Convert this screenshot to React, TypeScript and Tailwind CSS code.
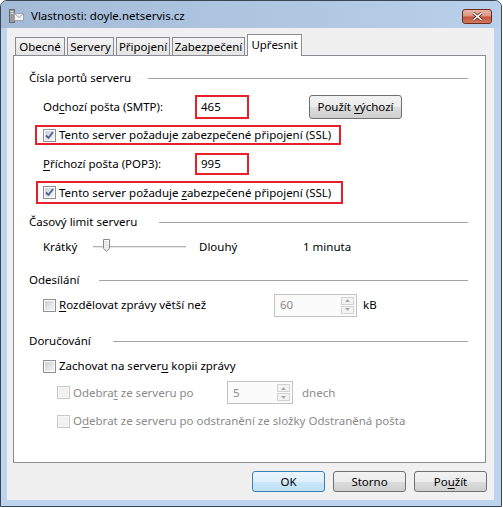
import type { ReactNode } from 'react';

const U = ({ children }: { children: ReactNode }) => <span className="underline underline-offset-2">{children}</span>;

function Check({ checked = false, disabled = false }: { checked?: boolean; disabled?: boolean }) {
  return (
    <span
      className={`relative flex w-[13px] h-[13px] shrink-0 items-center justify-center border ${
        disabled ? 'border-[#c8c8c8] bg-[#f7f7f7]' : 'border-[#8e8f8f] bg-white'
      }`}
    >
      <span
        className={`w-[9px] h-[9px] ${
          disabled ? 'bg-[#f1f1f1]' : 'bg-gradient-to-br from-[#cbcfd5] to-[#f6f6f6]'
        }`}
      />
      {checked && (
        <svg className="absolute inset-0" width="11" height="11" viewBox="0 0 11 11">
          <path d="M2 5.5 L4.5 8 L9 2" fill="none" stroke="#4a5f97" strokeWidth="1.8" />
        </svg>
      )}
    </span>
  );
}

function Spin({ value, w }: { value: string; w: string }) {
  return (
    <div className={`flex items-center h-[23px] border border-[#c2c2c2] bg-[#fbfbfb] pl-[5px] pr-[2px] ${w}`}>
      <span className="flex-1 text-[#8a8a8a]">{value}</span>
      <div className="flex flex-col gap-[1px]">
        <span className="flex w-[13px] h-[8px] items-center justify-center border border-[#d2d2d2] bg-[#f3f3f3]">
          <svg width="5" height="3" viewBox="0 0 5 3"><path d="M0 3 L2.5 0 L5 3 Z" fill="#a8a8a8" /></svg>
        </span>
        <span className="flex w-[13px] h-[8px] items-center justify-center border border-[#d2d2d2] bg-[#f3f3f3]">
          <svg width="5" height="3" viewBox="0 0 5 3"><path d="M0 0 L2.5 3 L5 0 Z" fill="#a8a8a8" /></svg>
        </span>
      </div>
    </div>
  );
}

function Btn({ children, def = false, className = '' }: { children: ReactNode; def?: boolean; className?: string }) {
  return (
    <div
      className={`flex items-center justify-center rounded-[3px] border ${
        def
          ? 'border-[#3c7fb1] bg-[linear-gradient(#eaf5fc_0%,#def0fb_50%,#cbe7f8_50%,#bfe0f5_100%)]'
          : 'border-[#707070] bg-[linear-gradient(#f2f2f2_0%,#ebebeb_50%,#dddddd_50%,#cfcfcf_100%)]'
      } ${className}`}
    >
      <span>{children}</span>
    </div>
  );
}

function Header({ text, w }: { text: string; w: string }) {
  return (
    <div className="flex items-center h-[16px] ml-[15px] mr-[17px]">
      <span className={`shrink-0 ${w}`}>{text}</span>
      <span className="flex-1 h-px bg-[#a5a5a5]" />
    </div>
  );
}

const tabs = [
  { name: 'Obecné', w: 'w-[50px]' },
  { name: 'Servery', w: 'w-[47px]' },
  { name: 'Připojení', w: 'w-[54px]' },
  { name: 'Zabezpečení', w: 'w-[73px]' },
];

export default function App() {
  return (
    <div className="w-[503px] h-[508px] bg-white font-['Segoe_UI','Noto_Sans',sans-serif] text-[11.5px] text-black leading-none whitespace-nowrap">
      <div className="w-[502px] h-[507px] rounded-t-[7px] border border-[#3a4656] bg-[#bcd4ec] flex flex-col overflow-hidden">
        {/* Title bar */}
        <div className="h-[27px] shrink-0 flex items-center bg-gradient-to-r from-[#a3bbd7] to-[#b9d0ea] pl-[8px] pr-[8px]">
          <svg width="15" height="14" viewBox="0 0 15 14" className="mt-[2px]">
            <rect x="0.5" y="0.5" width="5" height="13" fill="#9a9a9a" stroke="#6a6a6a" />
            <rect x="1.5" y="2" width="3" height="1" fill="#e0e0e0" />
            <rect x="1.5" y="4" width="3" height="1" fill="#e0e0e0" />
            <rect x="5.5" y="4.5" width="9" height="7" fill="#f4f4f4" stroke="#9aa4b0" />
            <path d="M5.5 4.5 L10 8.5 L14.5 4.5" fill="none" stroke="#9aa4b0" />
          </svg>
          <span className="ml-[7px] mt-[2px] text-[11.5px] text-black">Vlastnosti: doyle.netservis.cz</span>
          <div className="flex-1" />
          <div className="mt-[3px] mr-[1px] w-[30px] h-[15px] rounded-[3px] border border-[#6f2a20] bg-[linear-gradient(#eab4a6_0%,#dc9684_45%,#c4533c_55%,#d27a62_100%)] flex items-center justify-center">
            <svg width="11" height="9" viewBox="0 0 11 9">
              <path d="M1.5 1 L9.5 8 M9.5 1 L1.5 8" stroke="#5a2a22" strokeWidth="3" />
              <path d="M1.5 1 L9.5 8 M9.5 1 L1.5 8" stroke="#ffffff" strokeWidth="1.6" />
            </svg>
          </div>
        </div>

        {/* Client area */}
        <div className="ml-[6px] mr-[7px] h-[472px] bg-[#f0f0f0] flex flex-col">
          {/* Tabs */}
          <div className="mt-[6px] ml-[8px] h-[21px] flex items-end gap-[2px]">
            {tabs.map((t) => (
              <div
                key={t.name}
                className={`h-[18px] ${t.w} border border-b-0 border-[#898c95] bg-[linear-gradient(#f3f3f3,#e3e3e3)] flex items-center justify-center pt-[1px]`}
              >
                {t.name}
              </div>
            ))}
            <div className="relative z-10 -mb-[1px] h-[22px] w-[55px] border border-b-0 border-[#898c95] bg-white flex items-center justify-center pb-[2px]">
              Upřesnit
            </div>
          </div>

          {/* Panel */}
          <div className="ml-[6px] w-[473px] h-[408px] border border-[#898c95] bg-white flex flex-col">
            <div className="mt-[14px]">
              <Header text="Čísla portů serveru" w="w-[119px]" />
            </div>

            <div className="mt-[9px] ml-[29px] h-[24px] flex items-center">
              <span className="w-[152px]">
                Od<U>c</U>hozí pošta (SMTP):
              </span>
              <div className="w-[54px] h-[24px] border-2 border-[#e8202a] bg-white flex items-center pl-[4px]">465</div>
              <Btn className="ml-[60px] w-[93px] h-[24px]">
                Použít <U>v</U>ýchozí
              </Btn>
            </div>

            <div className="mt-[6px] ml-[21px] w-[306px] h-[20px] border-2 border-[#e8202a] flex items-center pl-[6px] gap-[3px]">
              <Check checked />
              <span>Tento server požaduje zabezpečené připojení (SSL)</span>
            </div>

            <div className="mt-[8px] ml-[29px] h-[22px] flex items-center">
              <span className="w-[152px]">
                <U>P</U>říchozí pošta (POP3):
              </span>
              <div className="w-[54px] h-[22px] border-2 border-[#e8202a] bg-white flex items-center pl-[4px]">995</div>
            </div>

            <div className="mt-[6px] ml-[22px] w-[307px] h-[23px] border-2 border-[#e8202a] flex items-center pl-[5px] gap-[3px]">
              <Check checked />
              <span>
                Tento server požaduje <U>z</U>abezpečené připojení (SSL)
              </span>
            </div>

            <div className="mt-[10px]">
              <Header text="Časový limit serveru" w="w-[130px]" />
            </div>

            <div className="mt-[9px] ml-[29px] h-[16px] flex items-center">
              <span className="w-[50px]">Krátký</span>
              <div className="relative w-[93px] h-[16px] flex items-center">
                <span className="w-full h-[3px] border-t border-[#b4b4b4] border-b border-b-white bg-[#e7e7e7]" />
                <svg className="absolute left-[10px] top-[0px]" width="7" height="13" viewBox="0 0 7 13">
                  <path d="M0.5 0.5 H6.5 V9.5 L3.5 12.5 L0.5 9.5 Z" fill="#e9e9e9" stroke="#8a8a8a" />
                  <path d="M1.5 1.5 H5.5 V5" fill="none" stroke="#ffffff" />
                </svg>
              </div>
              <span className="ml-[13px] w-[104px]">Dlouhý</span>
              <span>1 minuta</span>
            </div>

            <div className="mt-[17px]">
              <Header text="Odesílání" w="w-[70px]" />
            </div>

            <div className="mt-[6px] ml-[29px] h-[22px] flex items-center">
              <div className="w-[231px] flex items-center gap-[3px]">
                <Check />
                <span>
                  <U>R</U>ozdělovat zprávy větší než
                </span>
              </div>
              <Spin value="60" w="w-[83px]" />
              <span className="ml-[6px]">kB</span>
            </div>

            <div className="mt-[17px]">
              <Header text="Doručování" w="w-[84px]" />
            </div>

            <div className="mt-[9px] ml-[29px] h-[16px] flex items-center gap-[3px]">
              <Check />
              <span>
                Zachovat na server<U>u</U> kopii zprávy
              </span>
            </div>

            <div className="mt-[7px] ml-[43px] h-[23px] flex items-center text-[#8a8a8a]">
              <div className="w-[170px] flex items-center gap-[3px]">
                <Check disabled />
                <span>
                  Odebra<U>t</U> ze serveru po
                </span>
              </div>
              <Spin value="5" w="w-[66px]" />
              <span className="ml-[9px]">dnech</span>
            </div>

            <div className="mt-[9px] ml-[43px] h-[16px] flex items-center gap-[3px] text-[#8a8a8a]">
              <Check disabled />
              <span>
                O<U>d</U>ebrat ze serveru po odstranění ze složky Odstraněná pošta
              </span>
            </div>
          </div>

          {/* Buttons */}
          <div className="mt-[8px] mr-[7px] flex justify-end gap-[8px]">
            <Btn def className="w-[73px] h-[21px]">OK</Btn>
            <Btn className="w-[73px] h-[21px]">Storno</Btn>
            <Btn className="w-[73px] h-[21px]">
              Po<U>u</U>žít
            </Btn>
          </div>
        </div>
      </div>
    </div>
  );
}
